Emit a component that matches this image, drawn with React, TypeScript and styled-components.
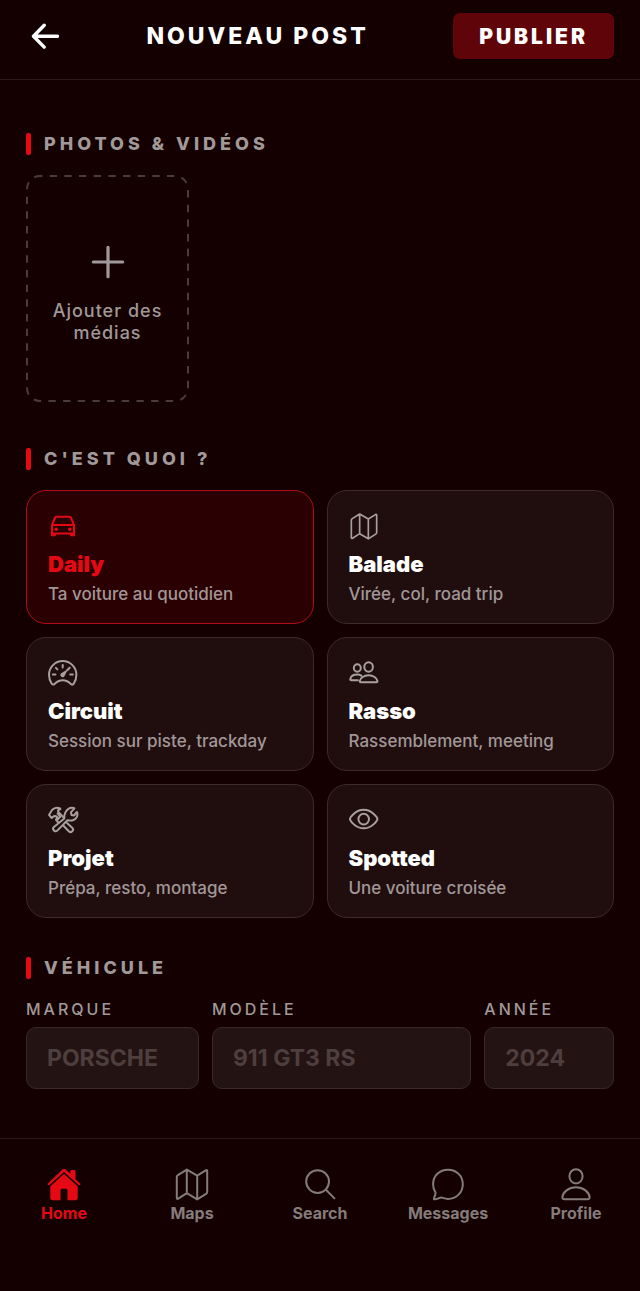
import React, { useState } from "react";
import styled, { createGlobalStyle } from "styled-components";

const GlobalStyle = createGlobalStyle`
  *, *::before, *::after { box-sizing: border-box; }
  body {
    margin: 0;
    background: #140000;
    color: #ffffff;
    font-family: Inter, "Liberation Sans", sans-serif;
  }
  button, input { font: inherit; color: inherit; }
`;

const Page = styled.div`
  display: flex;
  flex-direction: column;
  min-height: 100vh;
`;

const Header = styled.header`
  display: flex;
  align-items: center;
  justify-content: space-between;
  padding: 13px 26px 20px;
  border-bottom: 1px solid #2b1818;
`;

const BackButton = styled.button`
  display: flex;
  align-items: center;
  justify-content: center;
  width: 36px;
  height: 40px;
  padding: 0;
  border: 0;
  background: none;
  cursor: pointer;
`;

const Title = styled.h1`
  margin: 0;
  font-size: 23px;
  line-height: 28px;
  font-weight: 800;
  letter-spacing: 3px;
`;

const PublishButton = styled.button`
  height: 46px;
  padding: 0 26px;
  border: 0;
  border-radius: 7px;
  background: #5f0409;
  font-size: 21px;
  font-weight: 900;
  letter-spacing: 3px;
  cursor: pointer;
`;

const Main = styled.main`
  flex: 1;
  display: flex;
  flex-direction: column;
  padding: 53px 26px 48px;
`;

const Section = styled.section`
  display: flex;
  flex-direction: column;
  gap: 20px;
  & + & { margin-top: 39px; }
`;

const SectionTitle = styled.h2`
  display: flex;
  align-items: center;
  gap: 13px;
  margin: 0;
  color: #a19999;
  font-size: 18px;
  line-height: 22px;
  font-weight: 800;
  letter-spacing: 4px;
  &::before {
    content: "";
    width: 5px;
    height: 22px;
    border-radius: 2px;
    background: #e50914;
  }
`;

const MediaRow = styled.div`
  display: flex;
  padding-bottom: 7px;
`;

const AddMedia = styled.button`
  position: relative;
  display: flex;
  flex-direction: column;
  align-items: center;
  justify-content: center;
  gap: 20px;
  width: 163px;
  height: 227px;
  padding: 10px 16px 0;
  border: 0;
  background: none;
  color: #a19999;
  font-size: 18px;
  line-height: 22px;
  font-weight: 500;
  letter-spacing: 1px;
  cursor: pointer;
`;

const DashedFrame = styled.svg`
  position: absolute;
  inset: 0;
  width: 100%;
  height: 100%;
  rect {
    width: calc(100% - 2px);
    height: calc(100% - 2px);
  }
`;

const CardGrid = styled.div`
  display: grid;
  grid-template-columns: 1fr 1fr;
  gap: 13px;
`;

const Card = styled.button<{ $active: boolean }>`
  display: flex;
  flex-direction: column;
  align-items: flex-start;
  padding: 20px 21px 19px;
  border: 1px solid ${(p) => (p.$active ? "#b00d16" : "#3d2b2b")};
  border-radius: 20px;
  background: ${(p) => (p.$active ? "#2b0002" : "#200e0e")};
  color: ${(p) => (p.$active ? "#e50914" : "#a89f9f")};
  text-align: left;
  cursor: pointer;
`;

const CardTitle = styled.span<{ $active: boolean }>`
  margin-top: 9px;
  color: ${(p) => (p.$active ? "#e50914" : "#ffffff")};
  font-size: 22px;
  line-height: 28px;
  font-weight: 900;
`;

const CardText = styled.span`
  margin-top: 6px;
  color: #a19797;
  font-size: 17px;
  line-height: 20px;
  font-weight: 500;
`;

const Fields = styled.div`
  display: grid;
  grid-template-columns: 4fr 6fr 3fr;
  gap: 13px;
`;

const Field = styled.label`
  display: flex;
  flex-direction: column;
  gap: 8px;
  min-width: 0;
  color: #a19999;
  font-size: 16px;
  line-height: 20px;
  font-weight: 500;
  letter-spacing: 3px;
`;

const FieldInput = styled.input`
  width: 100%;
  height: 62px;
  padding: 0 20px;
  border: 1px solid #382828;
  border-radius: 10px;
  background: #231313;
  color: #ffffff;
  font-size: 23px;
  font-weight: 700;
  letter-spacing: 0;
  &::placeholder { color: #4e3f3f; opacity: 1; }
`;

const TabBar = styled.nav`
  display: flex;
  padding: 27px 0 68px;
  border-top: 1px solid #2b1818;
`;

const Tab = styled.a<{ $active: boolean }>`
  flex: 1;
  display: flex;
  flex-direction: column;
  align-items: center;
  gap: 1px;
  color: ${(p) => (p.$active ? "#e50914" : "#857b7b")};
  font-size: 16px;
  line-height: 20px;
  font-weight: 700;
  text-decoration: none;
`;

const Line = styled.svg`
  display: block;
  fill: none;
  stroke: currentColor;
  stroke-width: 2;
  stroke-linecap: round;
  stroke-linejoin: round;
`;

const CarIcon = () => (
  <Line width="30" height="30" viewBox="0 0 30 30" aria-hidden="true">
    <path d="M4 14.200 7 6.700q.4-1 1.500-1h13q1.100 0 1.500 1l3 7.500v10M4 14.200v10M4 14h22M4 22.400h22M4.400 24.300h2.500v-1.600M25.600 24.300h-2.500v-1.600" />
    <circle cx="8.200" cy="18.200" r="1.800" fill="currentColor" stroke="none" />
    <circle cx="21.800" cy="18.200" r="1.800" fill="currentColor" stroke="none" />
  </Line>
);

const MapIcon = ({ size }: { size: number }) => (
  <Line width={size} height={size} viewBox="0 0 36 36" aria-hidden="true">
    <path
      d="M12.800 3.600 3.900 9.200Q2.800 9.900 2.800 11.100v20.700q0 1.700 1.500.9l8.500-5.500 10.400 6.200 8.900-5.600q1.100-.7 1.100-1.900V5.200q0-1.700-1.500-.9l-8.500 5.300zM12.800 3.600v23.600M23.200 9.600v23.800"
    />
  </Line>
);

const GaugeIcon = () => (
  <Line width="30" height="30" viewBox="0 0 30 30" aria-hidden="true">
    <path d="M3.700 25.700C2 23.200 1 20.400 1 16.800a13.700 13.700 0 0 1 27.400 0c0 3.600-1 6.400-2.700 8.900-.7 1-1.700 1.100-2.700.4-2.300-2.300-4.900-3.800-8.300-3.800s-6 1.500-8.300 3.800c-1 .7-2 .6-2.700-.4z" />
    <path d="M14.700 7v2.400M4.800 16.600h2.600M22.200 16.600h2.600M7.900 9.900l1.500 1.500M21.700 9.700l-2.500 2.600" />
    <path fill="currentColor" stroke="none" d="m19.900 11.300-3.200 6.500a2.200 2.200 0 1 1-3.500-2.500z" />
  </Line>
);

const PeopleIcon = () => (
  <Line width="30" height="30" viewBox="0 0 30 30" aria-hidden="true">
    <ellipse cx="19.600" cy="9" rx="4.300" ry="4.700" />
    <ellipse cx="8.300" cy="10" rx="3.500" ry="3.800" />
    <path d="M19.600 17.200c-4.700 0-8.300 2.800-8.800 5.700q-.2 1.300 1 1.300h15.600q1.200 0 1-1.300c-.5-2.900-4.100-5.700-8.800-5.700zM8.800 22.200H2.300q-1.200 0-1-1.100c.5-2.500 3.200-4.500 7-4.500 1.700 0 3 .4 4 1" />
  </Line>
);

const ToolsIcon = () => (
  <Line width="32" height="30" viewBox="1 0 32 30" aria-hidden="true">
    <path d="M17.300 13.400c-.4-1.900 0-4.200 1.200-6.200 1.700-2.900 4.900-5 8.300-4.200q1 .2.300.9l-3.100 3.200.4 2.800 2.800.5 2.200-3.100q.6-.7.900.2c.6 3.200-.9 6.200-3.800 7.500-2.100.9-4.200.7-6.100.2L10.500 25.400a2.500 2.500 0 0 1-3.600-3.500z" />
    <path d="m11.300 17.500-2.300-2.700 1.400-2.600-1.600-1.200-2.100.3-2 1.700L2 9.900l1.800-3c1.600-3 5.200-4.800 8.600-3.700 1.300.4 1.300 1 .2 1.200-1.700.4-1.900 1.500-1.200 2.600l5 5.400M20 18l5.200 4.800a2.400 2.400 0 0 1-3.400 3.500L16.700 21" />
    <path d="m10.600 8.500 2.600 3.200-2.400 2.600" />
  </Line>
);

const EyeIcon = () => (
  <Line width="30" height="30" viewBox="0 0 30 30" aria-hidden="true">
    <path d="M1 14c0 1.300 5.100 9.300 13.700 9.300S28.400 15.300 28.400 14 23.300 4.800 14.700 4.800 1 12.700 1 14z" />
    <circle cx="14.700" cy="14.100" r="5.300" />
  </Line>
);

const HomeIcon = () => (
  <svg width="36" height="36" viewBox="0 0 36 36" fill="currentColor" aria-hidden="true">
    <path d="M16.700 3.200q1.300-1.100 2.600 0l5 4.600V5.300q0-1.200 1.200-1.200h2.800q1.200 0 1.200 1.200v7.900l4.600 4.300q.7.700.1 1.400-.7.700-1.500.1L18 5.900 3.300 19q-.8.600-1.500-.1-.6-.7.100-1.400z" />
    <path d="M18 8 31.700 20.300v11.300q0 2.600-2.600 2.600h-7.600v-9.900q0-1.500-1.500-1.500h-4q-1.500 0-1.500 1.500v9.900H6.900q-2.600 0-2.600-2.600V20.300z" />
  </svg>
);

const SearchIcon = () => (
  <Line width="36" height="36" viewBox="0 0 36 36" aria-hidden="true">
    <circle cx="15.600" cy="15.600" r="11.400" />
    <path d="m24 23.800 8.400 8.600" />
  </Line>
);

const ChatIcon = () => (
  <Line width="36" height="36" viewBox="0 0 36 36" aria-hidden="true">
    <path d="M5.400 26.300C3.800 24 3.100 21.200 3.100 18.300 3.100 9.800 9.500 3.700 18 3.700S32.800 10 32.800 18.200 26.500 32.900 18 32.900c-2.300 0-4.300-.8-6-1.300-1.600-.4-4.500 1.400-7.200 1.700q-1.300.1-.8-1.100c.7-1.800 2.100-4.500 1.400-5.900z" />
  </Line>
);

const PersonIcon = () => (
  <Line width="36" height="36" viewBox="0 0 36 36" aria-hidden="true">
    <ellipse cx="18" cy="10.300" rx="6.600" ry="7.100" />
    <path d="M18 21.300c-7.500 0-13 4.900-13.600 9.600-.2 1.500.6 2.400 2 2.400h23.200c1.400 0 2.200-.9 2-2.400-.6-4.700-6.100-9.600-13.600-9.600z" />
  </Line>
);

const cards = [
  { title: "Daily", text: "Ta voiture au quotidien", icon: <CarIcon /> },
  { title: "Balade", text: "Virée, col, road trip", icon: <MapIcon size={30} /> },
  { title: "Circuit", text: "Session sur piste, trackday", icon: <GaugeIcon /> },
  { title: "Rasso", text: "Rassemblement, meeting", icon: <PeopleIcon /> },
  { title: "Projet", text: "Prépa, resto, montage", icon: <ToolsIcon /> },
  { title: "Spotted", text: "Une voiture croisée", icon: <EyeIcon /> },
];

const fields = [
  { label: "MARQUE", placeholder: "PORSCHE" },
  { label: "MODÈLE", placeholder: "911 GT3 RS" },
  { label: "ANNÉE", placeholder: "2024" },
];

const tabs = [
  { label: "Home", icon: <HomeIcon /> },
  { label: "Maps", icon: <MapIcon size={36} /> },
  { label: "Search", icon: <SearchIcon /> },
  { label: "Messages", icon: <ChatIcon /> },
  { label: "Profile", icon: <PersonIcon /> },
];

export default function App() {
  const [kind, setKind] = useState("Daily");

  return (
    <Page>
      <GlobalStyle />
      <Header>
        <BackButton type="button" aria-label="Retour">
          <Line width="30" height="30" viewBox="0 0 30 30" aria-hidden="true">
            <path strokeWidth="3.400" d="M15.200 4.300 4.500 15.200 15.200 26.100M5.500 15.200h23" />
          </Line>
        </BackButton>
        <Title>NOUVEAU POST</Title>
        <PublishButton type="button">PUBLIER</PublishButton>
      </Header>

      <Main>
        <Section>
          <SectionTitle>PHOTOS &amp; VIDÉOS</SectionTitle>
          <MediaRow>
            <AddMedia type="button">
              <DashedFrame aria-hidden="true">
                <rect x="1" y="1" rx="13" fill="none" stroke="#4a3c3c" strokeWidth="2" strokeDasharray="7.400 7.270" strokeDashoffset="5" />
              </DashedFrame>
              <Line width="36" height="36" viewBox="0 0 36 36" aria-hidden="true">
                <path strokeWidth="3.200" d="M18 3.300v29.400M3.300 18h29.400" />
              </Line>
              <span>Ajouter des médias</span>
            </AddMedia>
          </MediaRow>
        </Section>

        <Section>
          <SectionTitle>C'EST QUOI ?</SectionTitle>
          <CardGrid>
            {cards.map((c) => {
              const active = c.title === kind;
              return (
                <Card key={c.title} type="button" $active={active} aria-pressed={active} onClick={() => setKind(c.title)}>
                  {c.icon}
                  <CardTitle $active={active}>{c.title}</CardTitle>
                  <CardText>{c.text}</CardText>
                </Card>
              );
            })}
          </CardGrid>
        </Section>

        <Section>
          <SectionTitle>VÉHICULE</SectionTitle>
          <Fields>
            {fields.map((f) => (
              <Field key={f.label}>
                {f.label}
                <FieldInput type="text" placeholder={f.placeholder} />
              </Field>
            ))}
          </Fields>
        </Section>
      </Main>

      <TabBar>
        {tabs.map((t) => (
          <Tab key={t.label} href="#" $active={t.label === "Home"}>
            {t.icon}
            {t.label}
          </Tab>
        ))}
      </TabBar>
    </Page>
  );
}
